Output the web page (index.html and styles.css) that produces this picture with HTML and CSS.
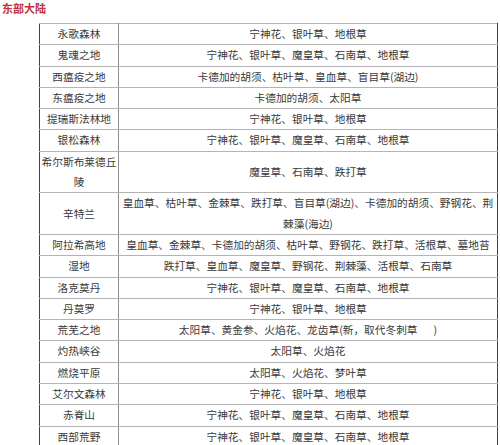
FILE: index.html
```html
<!DOCTYPE html>
<html lang="zh-CN">
<head>
<meta charset="utf-8">
<title>东部大陆</title>
<link rel="stylesheet" href="styles.css">
</head>
<body>
<h3 class="title">东部大陆</h3>
<table class="herbs">
  <colgroup><col class="c-zone"><col class="c-herb"></colgroup>
  <tbody>
    <tr><td>永歌森林</td><td>宁神花、银叶草、地根草</td></tr>
    <tr><td>鬼魂之地</td><td>宁神花、银叶草、魔皇草、石南草、地根草</td></tr>
    <tr><td>西瘟疫之地</td><td>卡德加的胡须、枯叶草、皇血草、盲目草(湖边)</td></tr>
    <tr><td>东瘟疫之地</td><td>卡德加的胡须、太阳草</td></tr>
    <tr><td>提瑞斯法林地</td><td>宁神花、银叶草、地根草</td></tr>
    <tr><td>银松森林</td><td>宁神花、银叶草、魔皇草、石南草、地根草</td></tr>
    <tr><td>希尔斯布莱德丘陵</td><td>魔皇草、石南草、跌打草</td></tr>
    <tr><td>辛特兰</td><td>皇血草、枯叶草、金棘草、跌打草、盲目草(湖边)、卡德加的胡须、野钢花、荆棘藻(海边)</td></tr>
    <tr><td>阿拉希高地</td><td>皇血草、金棘草、卡德加的胡须、枯叶草、野钢花、跌打草、活根草、墓地苔</td></tr>
    <tr><td>湿地</td><td>跌打草、皇血草、魔皇草、野钢花、荆棘藻、活根草、石南草</td></tr>
    <tr><td>洛克莫丹</td><td>宁神花、银叶草、魔皇草、石南草、地根草</td></tr>
    <tr><td>丹莫罗</td><td>宁神花、银叶草、地根草</td></tr>
    <tr><td>荒芜之地</td><td>太阳草、黄金参、火焰花、龙齿草(新，取代冬刺草<span class="gap"></span>)</td></tr>
    <tr><td>灼热峡谷</td><td>太阳草、火焰花</td></tr>
    <tr><td>燃烧平原</td><td>太阳草、火焰花、梦叶草</td></tr>
    <tr><td>艾尔文森林</td><td>宁神花、银叶草、地根草</td></tr>
    <tr><td>赤脊山</td><td>宁神花、银叶草、魔皇草、石南草、地根草</td></tr>
    <tr><td>西部荒野</td><td>宁神花、银叶草、魔皇草、石南草、地根草</td></tr>
  </tbody>
</table>
</body>
</html>
```
FILE: styles.css
```css
html, body {
  margin: 0;
  padding: 0;
  background: #ffffff;
}
body {
  font-family: "Noto Sans CJK SC", "Microsoft YaHei", sans-serif;
  color: #3a3a3a;
}
.title {
  margin: 0;
  padding: 0 0 0 2px;
  height: 23px;
  font-size: 11px;
  line-height: 16px;
  font-weight: bold;
  color: #c4313a;
}
.herbs {
  margin-left: 39px;
  width: 459px;
  border-collapse: collapse;
  table-layout: fixed;
  border: 1px solid #444444;
  font-size: 10.7px;
  line-height: 20.3px;
}
.c-zone { width: 79px; }
.herbs td {
  padding: 0;
  border: 1px solid #b4b4b4;
  text-align: center;
  vertical-align: middle;
}
.herbs td:first-child {
  border-left: 1px solid #444444;
  border-right: 1px solid #909090;
}
.herbs td:last-child {
  border-right: 1px solid #444444;
}
.gap {
  display: inline-block;
  width: 16px;
}
```
